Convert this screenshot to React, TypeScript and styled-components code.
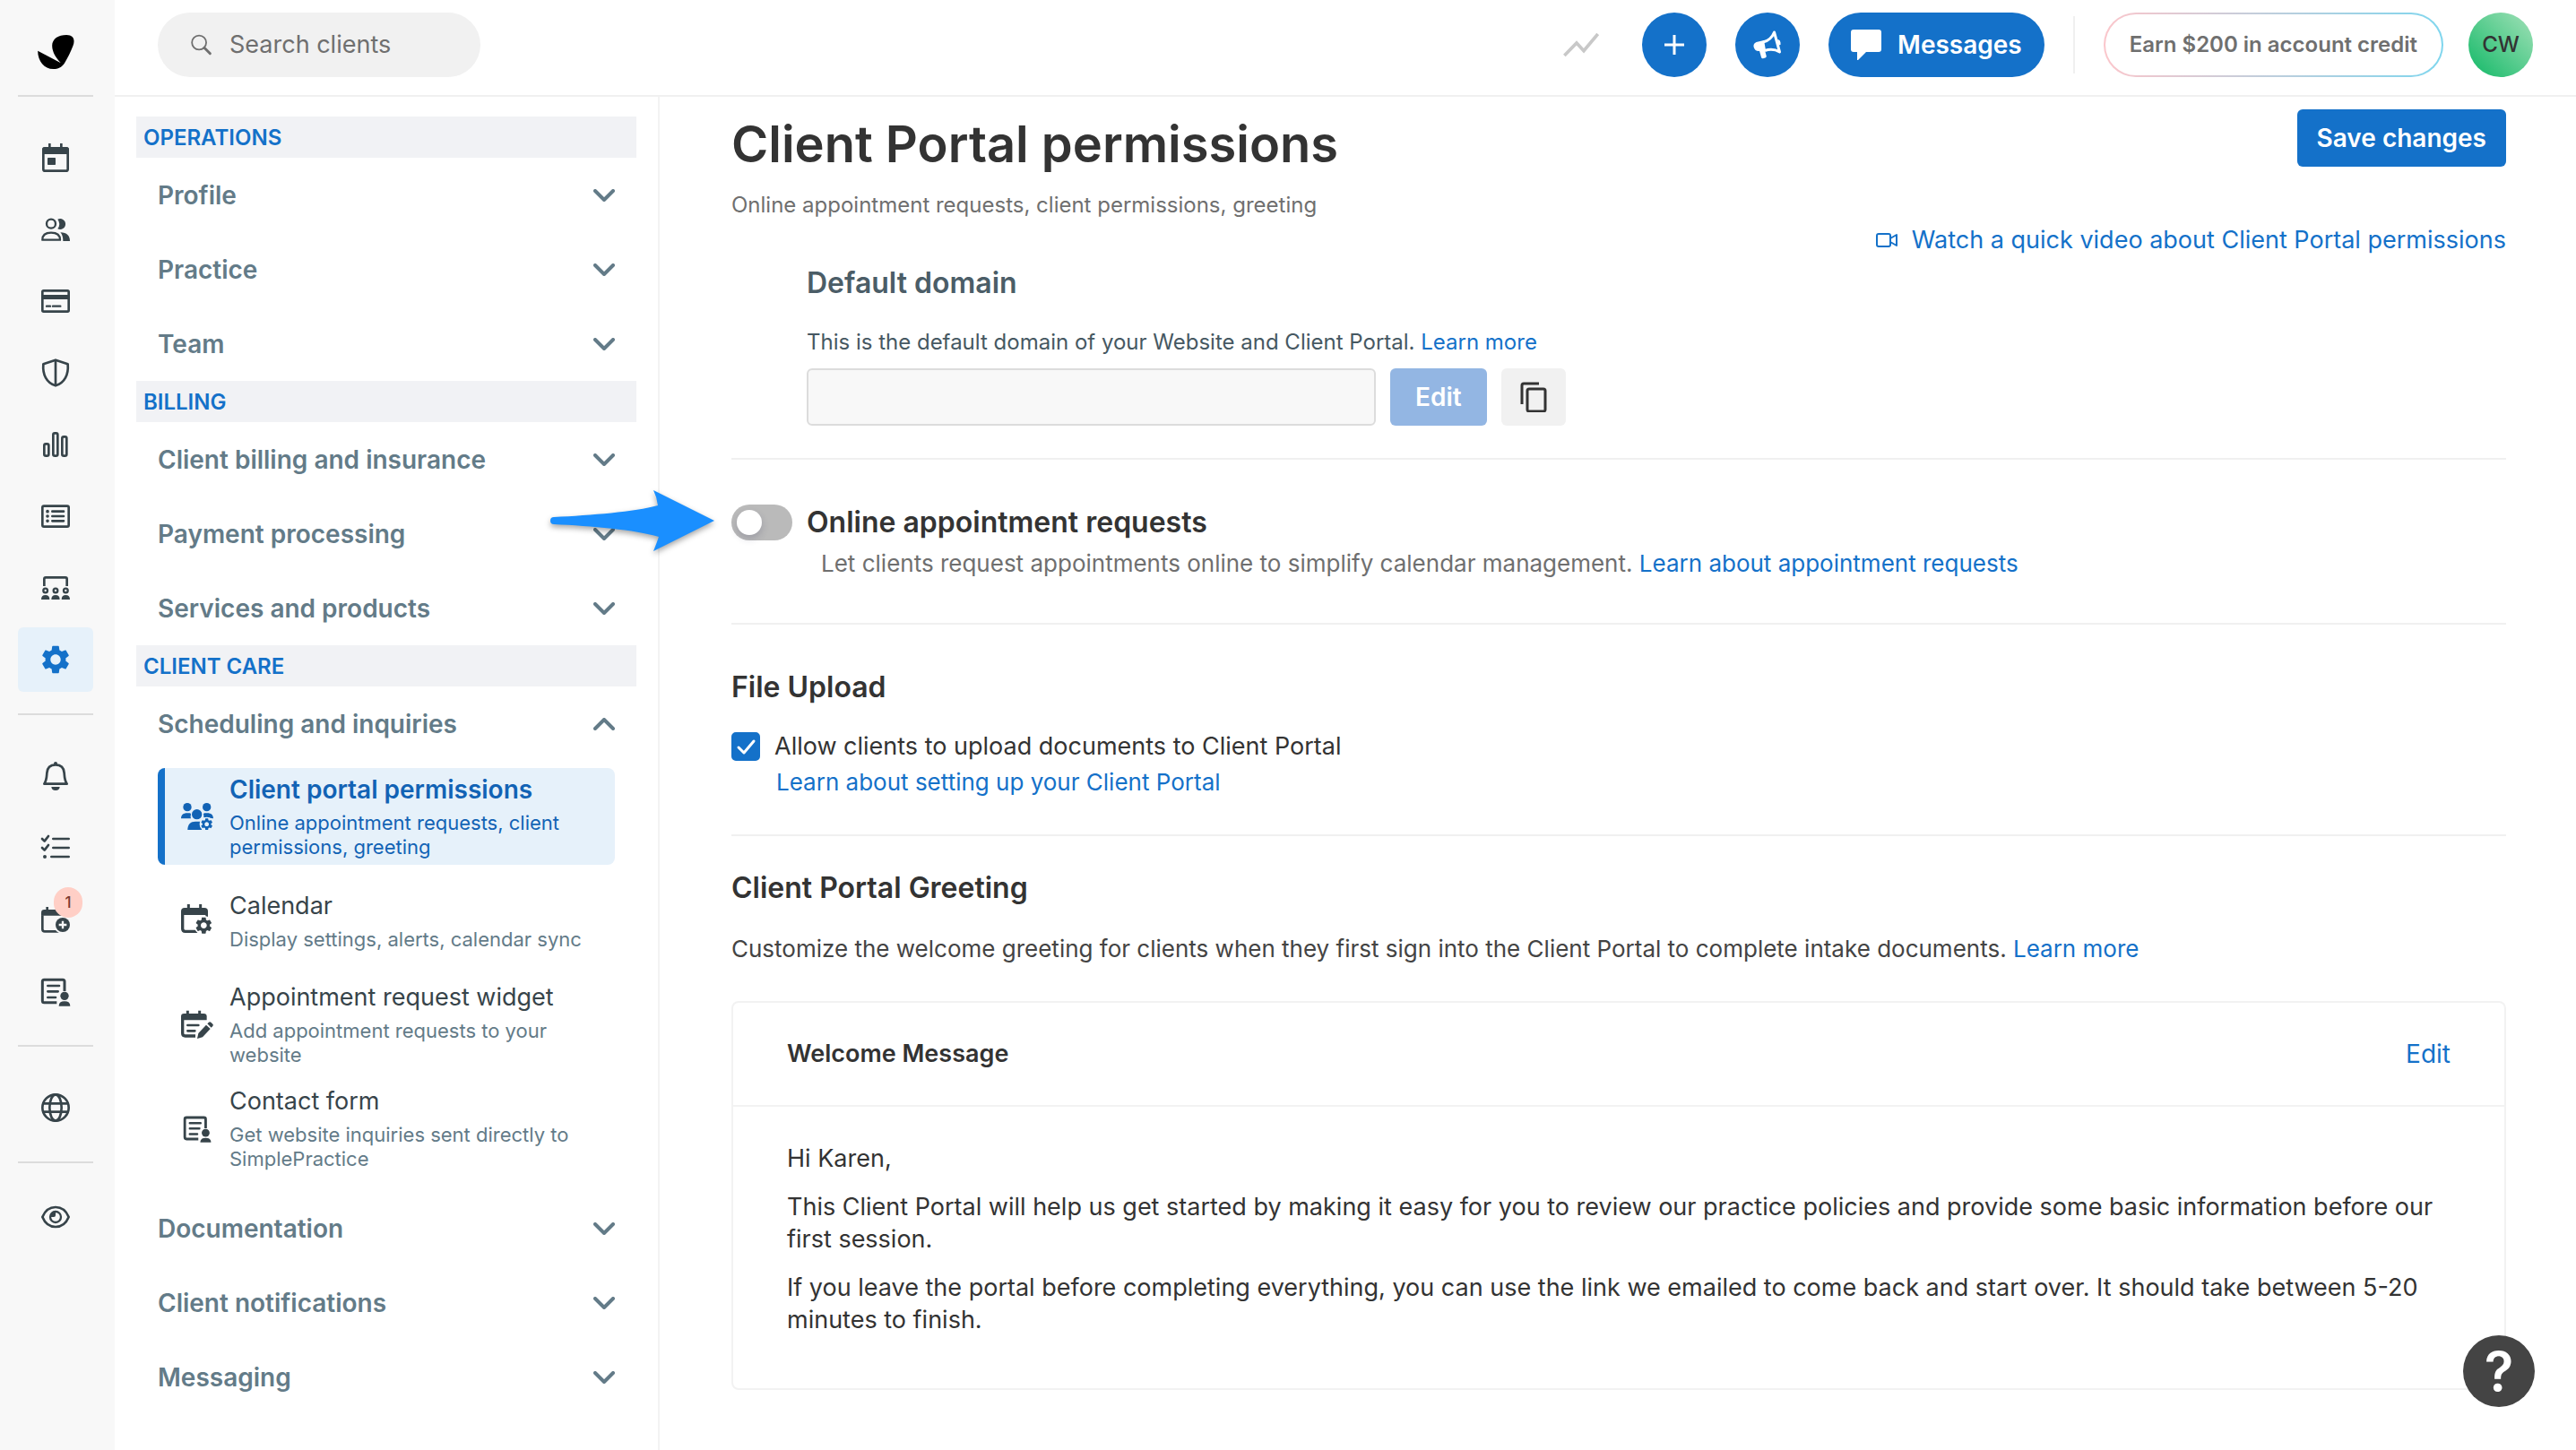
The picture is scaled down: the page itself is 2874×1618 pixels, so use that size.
import React from "react";
import styled, { createGlobalStyle, css } from "styled-components";
import { MdSettings } from "react-icons/md";

const color = {
  blue: "#1471c9",
  deepBlue: "#1263b5",
  tint: "#e6f1fa",
  ink: "#333333",
  slate: "#37444a",
  steel: "#637b88",
  grey: "#6f6f6f",
  line: "#f0f0f0",
  rail: "#f8f8f8",
};

const GlobalStyle = createGlobalStyle`
  *, *::before, *::after { box-sizing: border-box; }
  body {
    margin: 0;
    background: #ffffff;
    color: ${color.ink};
    font-family: Inter, "Liberation Sans", sans-serif;
    font-size: 27px;
    line-height: 36px;
  }
  h1, h2, h3, p, ul { margin: 0; padding: 0; }
  ul { list-style: none; }
  button, input { font: inherit; color: inherit; border: 0; margin: 0; padding: 0; }
  button { background: none; cursor: pointer; }
  a { color: ${color.blue}; text-decoration: none; }
  svg { display: block; flex: none; }
`;

/* ---------- shell ---------- */

const Shell = styled.div`
  display: flex;
  min-height: 100vh;
`;

const Rail = styled.nav`
  flex: 0 0 128px;
  padding: 0 24px 0 20px;
  background: ${color.rail};
  color: ${color.slate};
`;

const LogoLink = styled.a`
  display: flex;
  align-items: center;
  justify-content: center;
  height: 106px;
  padding-top: 10px;
  color: #000000;
`;

const RailGroup = styled.ul<{ $tight?: boolean }>`
  display: flex;
  flex-direction: column;
  gap: 8px;
  padding: ${(p) => (p.$tight ? "24px 0" : "32px 0 24px")};
  border-top: 2px solid #dcdcdc;
`;

const RailLink = styled.a<{ $active?: boolean }>`
  position: relative;
  display: flex;
  align-items: center;
  justify-content: center;
  height: 72px;
  border-radius: 6px;
  color: ${(p) => (p.$active ? color.blue : color.slate)};
  background: ${(p) => (p.$active ? color.tint : "transparent")};
`;

const Badge = styled.span`
  position: absolute;
  top: 0;
  left: 40px;
  width: 32px;
  height: 34px;
  border-radius: 17px;
  background: #ffcfc6;
  color: #7c3a30;
  font-size: 17px;
  font-weight: 500;
  line-height: 34px;
  text-align: center;
`;

const Column = styled.div`
  flex: 1;
  min-width: 0;
  display: flex;
  flex-direction: column;
`;

const Body = styled.div`
  flex: 1;
  display: flex;
`;

/* ---------- top bar ---------- */

const TopBar = styled.header`
  display: flex;
  align-items: center;
  height: 108px;
  padding: 0 48px 6px;
  border-bottom: 2px solid ${color.line};
`;

const SearchBox = styled.label`
  display: flex;
  align-items: center;
  gap: 18px;
  width: 360px;
  height: 72px;
  padding: 0 36px;
  border-radius: 36px;
  background: #f1f1f1;
  color: ${color.grey};
`;

const SearchInput = styled.input`
  width: 100%;
  min-width: 0;
  background: none;
  outline: none;
  &::placeholder { color: ${color.grey}; opacity: 1; }
`;

const TopActions = styled.div`
  display: flex;
  align-items: center;
  gap: 32px;
  margin-left: auto;
`;

const TrendButton = styled.button`
  width: 40px;
  margin-right: 16px;
`;

const RoundButton = styled.button`
  display: flex;
  align-items: center;
  justify-content: center;
  width: 72px;
  height: 72px;
  border-radius: 50%;
  background: ${color.blue};
  color: #ffffff;
`;

const MessagesButton = styled.button`
  display: flex;
  align-items: center;
  gap: 18px;
  height: 72px;
  padding: 0 25px;
  border-radius: 36px;
  background: ${color.blue};
  color: #ffffff;
  font-size: 28px;
  font-weight: 600;
`;

const Separator = styled.span`
  width: 2px;
  height: 64px;
  background: ${color.line};
`;

const CreditButton = styled.button`
  height: 72px;
  padding: 0 27px;
  border: 2px solid transparent;
  border-radius: 36px;
  background:
    linear-gradient(#ffffff, #ffffff) padding-box,
    linear-gradient(90deg, #fbc6cb, #7fd6ee) border-box;
  color: ${color.grey};
  font-size: 24px;
  font-weight: 600;
`;

const Avatar = styled.button`
  width: 72px;
  height: 72px;
  margin-left: -4px;
  border-radius: 50%;
  background: linear-gradient(45deg, #22bd70 12%, #94ddb0 90%);
  font-size: 24px;
  font-weight: 500;
`;

/* ---------- settings menu ---------- */

const Menu = styled.nav`
  flex: 0 0 608px;
  padding: 22px 24px 36px;
  border-right: 2px solid #f3f3f3;
`;

const MenuHeading = styled.h2`
  padding: 6px 8px 4px;
  background: #f1f2f5;
  color: ${color.blue};
  font-size: 24px;
  font-weight: 600;
`;

const MenuRow = styled.button`
  display: flex;
  align-items: center;
  justify-content: space-between;
  width: 100%;
  height: 83px;
  padding: 0 24px;
  color: ${color.steel};
  font-size: 28px;
  font-weight: 600;
  text-align: left;
`;

const SubMenu = styled.ul`
  display: flex;
  flex-direction: column;
  gap: 8px;
  padding: 8px 24px 16px;
`;

const SubLink = styled.a<{ $active?: boolean }>`
  display: flex;
  align-items: center;
  gap: 18px;
  min-height: 108px;
  padding: 6px 18px;
  border-left: 8px solid transparent;
  border-radius: 8px;
  color: ${color.slate};
  ${(p) =>
    p.$active &&
    css`
      border-left-color: ${color.blue};
      background: ${color.tint};
      color: ${color.deepBlue};
    `}
`;

const IconSlot = styled.span`
  display: flex;
  justify-content: center;
  flex: 0 0 36px;
`;

const SubText = styled.span`
  display: flex;
  flex-direction: column;
  gap: 6px;
`;

const SubTitle = styled.span<{ $active?: boolean }>`
  font-size: ${(p) => (p.$active ? 28 : 27)}px;
  font-weight: ${(p) => (p.$active ? 600 : 400)};
`;

const SubNote = styled.span<{ $active?: boolean }>`
  color: ${(p) => (p.$active ? color.deepBlue : color.steel)};
  font-size: 22px;
  line-height: 27px;
`;

/* ---------- page ---------- */

const Page = styled.main`
  flex: 1;
  min-width: 0;
  padding: 14px 78px 68px 80px;
`;

const PageHead = styled.div`
  display: flex;
  justify-content: space-between;
  margin-bottom: 10px;
`;

const PageTitle = styled.h1`
  margin-bottom: 11px;
  font-size: 56px;
  font-weight: 600;
  line-height: 78px;
`;

const Note = styled.p`
  font-size: 24px;
  color: ${color.grey};
`;

const HeadActions = styled.div`
  display: flex;
  flex-direction: column;
  align-items: flex-end;
  gap: 64px;
`;

const SolidButton = styled.button<{ $muted?: boolean }>`
  height: 64px;
  padding: 0 ${(p) => (p.$muted ? 28 : 22)}px;
  border-radius: 6px;
  background: ${(p) => (p.$muted ? "#93b6e3" : color.blue)};
  color: #ffffff;
  font-size: 28px;
  font-weight: 600;
`;

const VideoLink = styled.a`
  display: flex;
  align-items: center;
  gap: 16px;
`;

const Section = styled.section<{ $top?: number; $bottom?: number }>`
  padding: ${(p) => p.$top ?? 50}px 0 ${(p) => p.$bottom ?? 40}px;
  border-bottom: 2px solid ${color.line};
  &:last-child { border-bottom: 0; }
`;

const Indent = styled.div`
  padding-left: 84px;
`;

const Heading = styled.h2<{ $gap?: number; $soft?: boolean }>`
  margin-bottom: ${(p) => p.$gap ?? 28}px;
  color: ${(p) => (p.$soft ? "#4b5d67" : color.ink)};
  font-size: 32px;
  font-weight: 600;
  line-height: 40px;
`;

const DomainLabel = styled.p`
  margin-bottom: 11px;
  color: #465862;
  font-size: 24px;
`;

const DomainRow = styled.div`
  display: flex;
  gap: 16px;
`;

const DomainInput = styled.input`
  width: 635px;
  height: 64px;
  padding: 0 20px;
  border: 2px solid #dcdcdc;
  border-radius: 6px;
  background: #f8f8f8;
`;

const CopyButton = styled.button`
  display: flex;
  align-items: center;
  justify-content: center;
  width: 72px;
  height: 64px;
  border-radius: 6px;
  background: #f1f1f1;
`;

const ToggleLine = styled.label`
  position: relative;
  display: flex;
  align-items: center;
  gap: 16px;
  width: max-content;
  margin-bottom: 8px;
`;

const Toggle = styled.input`
  appearance: none;
  display: flex;
  align-items: center;
  width: 68px;
  height: 40px;
  padding: 6px;
  border-radius: 20px;
  background: #bababa;
  cursor: pointer;
  &::before {
    content: "";
    width: 28px;
    height: 28px;
    border-radius: 50%;
    background: #ffffff;
    box-shadow: 0 4px 8px rgba(39, 39, 80, 0.2);
  }
  &:checked { background: ${color.blue}; justify-content: flex-end; }
`;

const ToggleTitle = styled.span`
  font-size: 32px;
  font-weight: 600;
  line-height: 40px;
`;

const ToggleNote = styled.p`
  padding-left: 100px;
  color: ${color.grey};
  font-size: 26px;
`;

const Pointer = styled.svg`
  position: absolute;
  top: -18px;
  right: calc(100% + 18px);
  filter: drop-shadow(0 3px 3px rgba(0, 0, 0, 0.35));
  pointer-events: none;
`;

const CheckLine = styled.label`
  display: flex;
  align-items: center;
  gap: 16px;
  width: max-content;
  margin-bottom: 4px;
`;

const CheckSlot = styled.span`
  display: grid;
  & > * { grid-area: 1 / 1; }
`;

const Checkbox = styled.input`
  appearance: none;
  width: 32px;
  height: 32px;
  border: 2px solid ${color.blue};
  border-radius: 5px;
  cursor: pointer;
  & + svg { visibility: hidden; pointer-events: none; }
  &:checked { background: ${color.blue}; }
  &:checked + svg { visibility: visible; }
`;

const CheckNote = styled.p`
  padding-left: 50px;
  font-size: 26px;
`;

const Lead = styled.p`
  margin-bottom: 40px;
  color: #444444;
  font-size: 26px;
`;

const Card = styled.article`
  border: 2px solid #f2f2f2;
  border-radius: 8px;
`;

const CardHead = styled.div`
  display: flex;
  justify-content: space-between;
  padding: 39px 60px;
  border-bottom: 2px solid #f2f2f2;
`;

const CardTitle = styled.h3`
  font-size: 27px;
  font-weight: 600;
`;

const TextButton = styled.button`
  color: ${color.blue};
  font-size: 28px;
`;

const CardBody = styled.div`
  padding: 40px 60px;
  & p { margin-bottom: 18px; }
`;

const HelpButton = styled.button`
  position: fixed;
  right: 46px;
  bottom: 48px;
  width: 80px;
  height: 80px;
  border-radius: 50%;
  background: #444444;
  color: #ffffff;
  font-size: 60px;
  font-weight: 600;
  line-height: 80px;
`;

/* ---------- icons ---------- */

type IconProps = { children: React.ReactNode; size?: number };

const Icon = ({ children, size = 36 }: IconProps) => (
  <svg
    width={size}
    height={size}
    viewBox="0 0 108 108"
    fill="none"
    stroke="currentColor"
    strokeWidth="8"
    strokeLinejoin="round"
    aria-hidden="true"
  >
    {children}
  </svg>
);

const solid = { fill: "currentColor", stroke: "none" };

const Logo = () => (
  <svg width="41" height="38" viewBox="66 57 122 114" fill="currentColor" aria-hidden="true">
    <path d="M66 110 L143 151 C128 135 114 115 114 93 C114 70 135 57 162 57 C187 57 191 74 184 93 C176 115 165 135 155 152 C146 165 134 171 118 171 C88 171 66 145 66 110Z" />
  </svg>
);

const CalendarIcon = () => (
  <Icon>
    <rect x="13" y="22" width="82" height="76" rx="6" />
    <path d="M9 42V28q0-10 10-10h70q10 0 10 10v14z" {...solid} />
    <path d="M30 6h8v16h-8zM69 6h8v16h-8z" {...solid} />
    <rect x="27" y="54" width="27" height="24" rx="2" {...solid} />
  </Icon>
);

const PeopleIcon = () => (
  <Icon>
    <circle cx="39" cy="35" r="15" strokeWidth="7" />
    <path d="M61 20A18 18 0 1 1 61 52A27 27 0 0 0 61 20z" {...solid} />
    <path d="M10 89C10 72 22 65 39 65S69 72 69 89z" strokeWidth="7" />
    <path d="M70 64C92 65 102 75 102 93H79C79 79 76 71 70 64z" {...solid} />
  </Icon>
);

const CardIcon = () => (
  <Icon>
    <rect x="10" y="19" width="88" height="70" rx="4" />
    <path d="M8 33h92v15H8z" {...solid} />
    <path d="M24 71h12M45 71h25" strokeWidth="7" strokeLinecap="round" />
  </Icon>
);

const ShieldIcon = () => (
  <Icon>
    <path d="M54 11L95 25C98 60 84 88 54 97C24 88 10 60 13 25z" />
    <path d="M54 11V97" />
  </Icon>
);

const BarsIcon = () => (
  <Icon>
    <rect x="16" y="52" width="15" height="40" rx="5" />
    <rect x="46" y="16" width="15" height="76" rx="5" />
    <rect x="76" y="28" width="15" height="64" rx="5" />
  </Icon>
);

const ListIcon = () => (
  <Icon>
    <rect x="10" y="20" width="88" height="69" rx="5" />
    <path d="M43 38h38M43 54h38M43 70h38" strokeWidth="8" strokeLinecap="round" />
    <path d="M27 38h.1M27 54h.1M27 70h.1" strokeWidth="11" strokeLinecap="round" />
  </Icon>
);

const GroupIcon = () => (
  <Icon>
    <path d="M16 48V24q0-5 5-5h66q5 0 5 5v24" />
    {[20, 54, 88].map((x) => (
      <g key={x}>
        <circle cx={x} cy="63" r="7" strokeWidth="7" />
        <path d={`M${x - 14} 93q0-15 14-15t14 15z`} {...solid} />
      </g>
    ))}
  </Icon>
);

const BellIcon = () => (
  <Icon>
    <path d="M16 80H92C84 68 84 58 83 44C82 26 72 16 54 16S26 26 25 44C24 58 24 68 16 80z" />
    <circle cx="54" cy="12" r="6" {...solid} />
    <path d="M40 90h28q-1 12-14 12t-14-12z" {...solid} />
  </Icon>
);

const ChecklistIcon = () => (
  <Icon>
    <path d="M46 24h52M46 54h52M40 84h58" strokeLinecap="round" />
    <path d="M9 24l8 8 13-17M9 54l8 8 13-17" strokeLinecap="round" />
    <circle cx="18" cy="84" r="6" {...solid} />
  </Icon>
);

const CalendarPlusIcon = () => (
  <Icon>
    <path d="M26 12v16" />
    <path d="M10 40v46q0 8 8 8h62" />
    <path d="M6 41V31q0-10 10-10h70v20z" {...solid} />
    <circle cx="78" cy="72" r="30" fill={color.rail} stroke="none" />
    <circle cx="78" cy="72" r="24" {...solid} />
    <path d="M78 59v26M65 72h26" stroke={color.rail} strokeWidth="7" />
  </Icon>
);

const FormIcon = ({ size, back = color.rail }: { size?: number; back?: string }) => (
  <Icon size={size}>
    <rect x="10" y="16" width="74" height="76" rx="6" strokeWidth="9" />
    <path d="M28 36h38M28 55h34M28 75h26" strokeLinecap="round" />
    <path d="M58 108V84q4-8 8-10V54h42v54z" fill={back} stroke="none" />
    <circle cx="84" cy="70" r="14" {...solid} />
    <path d="M65 104q0-16 19-16t19 16z" {...solid} />
  </Icon>
);

const GlobeIcon = () => (
  <Icon>
    <circle cx="54" cy="54" r="44" />
    <ellipse cx="54" cy="54" rx="20" ry="44" />
    <path d="M12 40h84M12 68h84" />
  </Icon>
);

const EyeIcon = () => (
  <Icon>
    <path d="M10 54C28 10 80 10 98 54C80 98 28 98 10 54z" />
    <circle cx="54" cy="54" r="18" strokeWidth="7" />
    <path d="M54 34v14q0 6-6 6H36q0-18 18-20z" {...solid} />
  </Icon>
);

const gear =
  "M19.14 12.94c.04-.3.06-.61.06-.94 0-.32-.02-.64-.07-.94l2.03-1.58a.49.49 0 0 0 .12-.61l-1.92-3.32a.488.488 0 0 0-.59-.22l-2.39.96c-.5-.38-1.03-.7-1.62-.94l-.36-2.54a.484.484 0 0 0-.48-.41h-3.84c-.24 0-.43.17-.47.41l-.36 2.54c-.59.24-1.13.57-1.62.94l-2.39-.96c-.22-.08-.47 0-.59.22L2.74 8.87c-.12.21-.08.47.12.61l2.03 1.58c-.05.3-.09.63-.09.94s.02.64.07.94l-2.03 1.58a.49.49 0 0 0-.12.61l1.92 3.32c.12.22.37.29.59.22l2.39-.96c.5.38 1.03.7 1.62.94l.36 2.54c.05.24.24.41.48.41h3.84c.24 0 .44-.17.47-.41l.36-2.54c.59-.24 1.13-.56 1.62-.94l2.39.96c.22.08.47 0 .59-.22l1.92-3.32c.12-.22.07-.47-.12-.61l-2.01-1.58zM12 15.6c-1.98 0-3.6-1.62-3.6-3.6s1.62-3.6 3.6-3.6 3.6 1.62 3.6 3.6-1.62 3.6-3.6 3.6z";

const MiniGear = ({ x, y, r, back }: { x: number; y: number; r: number; back: string }) => (
  <>
    <circle cx={x} cy={y} r={r + 4} fill={back} stroke="none" />
    <path d={gear} {...solid} transform={`translate(${x} ${y}) scale(${r / 10}) translate(-12 -12)`} />
  </>
);

const PeopleGearIcon = () => (
  <Icon>
    <g {...solid}>
      <circle cx="21" cy="23" r="14" />
      <circle cx="86" cy="23" r="14" />
      <circle cx="53" cy="47" r="17" />
      <path d="M0 61C0 49 8 43 20 43h9q5 1 4 5-3 7 0 13z" />
      <path d="M108 61C108 49 100 43 88 43h-9q-5 1-4 5 3 7 0 9z" />
      <path d="M22 99c0-19 10-28 26-28h22v28z" />
    </g>
    <MiniGear x={86} y={80} r={20} back={color.tint} />
  </Icon>
);

const CalendarGearIcon = () => (
  <Icon>
    <path d="M25 0v16M65 0v16" strokeWidth="9" />
    <path d="M5 34v48q0 9 9 9h46" strokeWidth="10" />
    <path d="M86 30v20" />
    <path d="M0 36V24q0-12 12-12h66q12 0 12 12v12z" {...solid} />
    <MiniGear x={76} y={71} r={28} back="#ffffff" />
  </Icon>
);

const CalendarEditIcon = () => (
  <Icon>
    <path d="M22 8v16M62 8v16" strokeWidth="9" />
    <path d="M5 38v46q0 9 9 9h34" strokeWidth="10" />
    <path d="M0 40V28q0-10 10-10h66q10 0 10 10v12z" {...solid} />
    <path d="M22 57h36M22 76h24" strokeLinecap="round" />
    <path d="M54 102l4-18 26-28 14 13-26 28z" {...solid} />
    <path d="M88 52l5-5q3-3 7 0l6 6q3 3 0 7l-5 5z" {...solid} />
  </Icon>
);

const Chevron = ({ up }: { up?: boolean }) => (
  <svg width="24" height="14" viewBox="0 0 24 14" fill="none" stroke="currentColor" strokeWidth="4" strokeLinecap="round" strokeLinejoin="round" aria-hidden="true">
    <path d={up ? "M2 12L12 2L22 12" : "M2 2L12 12L22 2"} />
  </svg>
);

const SearchIcon = () => (
  <svg width="26" height="26" viewBox="0 0 72 72" fill="none" stroke="currentColor" aria-hidden="true">
    <circle cx="28" cy="29" r="22" strokeWidth="5" />
    <path d="M44 45L62 63" strokeWidth="8" strokeLinecap="round" />
  </svg>
);

const TrendIcon = () => (
  <svg width="40" height="28" viewBox="0 0 120 84" fill="none" stroke="#c8c8c8" strokeWidth="11" aria-hidden="true">
    <path d="M4 78L45 36L69 62L116 6" />
  </svg>
);

const PlusIcon = () => (
  <svg width="22" height="22" viewBox="0 0 22 22" stroke="currentColor" strokeWidth="3" aria-hidden="true">
    <path d="M11 0V22M0 11H22" />
  </svg>
);

const MegaphoneIcon = () => (
  <svg width="36" height="36" viewBox="0 0 36 36" fill="none" stroke="currentColor" strokeWidth="3" strokeLinejoin="round" aria-hidden="true">
    <path d="M13 15Q22 13 25.500 4L31.500 26Q24 21.500 15 24.500" />
    <path d="M14 13L5.500 15Q2 16.500 2.500 20Q3.500 25 8 25L16 24z" fill="currentColor" stroke="none" />
    <path d="M8.500 23L11 32Q11.500 33.500 13 33.200L15.500 32.500Q17 32 16.700 30.500L14.500 22z" fill="currentColor" stroke="none" />
    <path d="M29 12Q33 12 32.500 18L30.500 18.500z" fill="currentColor" stroke="none" />
  </svg>
);

const ChatIcon = () => (
  <svg width="34" height="34" viewBox="0 0 34 34" fill="currentColor" aria-hidden="true">
    <path d="M3 0H31Q34 0 34 3V22Q34 25 31 25H17L8 34H7V25H3Q0 25 0 22V3Q0 0 3 0z" />
  </svg>
);

const VideoIcon = () => (
  <svg width="24" height="16" viewBox="0 0 24 16" fill="none" stroke="currentColor" strokeWidth="2" strokeLinejoin="round" aria-hidden="true">
    <rect x="1" y="1" width="15" height="14" rx="2" />
    <path d="M16 6L23 2V14L16 10" />
  </svg>
);

const CopyIcon = () => (
  <svg width="30" height="34" viewBox="0 0 30 34" fill="none" stroke="currentColor" strokeWidth="3" strokeLinejoin="round" aria-hidden="true">
    <rect x="8" y="8" width="20" height="25" rx="2" />
    <path d="M2 25V4Q2 2 4 2H21" />
  </svg>
);

/* ---------- data ---------- */

type RailItem = { label: string; icon: React.ReactNode; active?: boolean; badge?: string };

const railGroups: RailItem[][] = [
  [
    { label: "Calendar", icon: <CalendarIcon /> },
    { label: "Clients", icon: <PeopleIcon /> },
    { label: "Billing", icon: <CardIcon /> },
    { label: "Insurance", icon: <ShieldIcon /> },
    { label: "Analytics", icon: <BarsIcon /> },
    { label: "Activity", icon: <ListIcon /> },
    { label: "Supervision", icon: <GroupIcon /> },
    { label: "Settings", icon: <MdSettings size={38} />, active: true },
  ],
  [
    { label: "Reminders", icon: <BellIcon /> },
    { label: "Tasks", icon: <ChecklistIcon /> },
    { label: "Requests", icon: <CalendarPlusIcon />, badge: "1" },
    { label: "Inquiries", icon: <FormIcon /> },
  ],
  [{ label: "Website", icon: <GlobeIcon /> }],
  [{ label: "Preview", icon: <EyeIcon /> }],
];

const subItems = [
  {
    title: "Client portal permissions",
    note: "Online appointment requests, client permissions, greeting",
    icon: <PeopleGearIcon />,
    active: true,
  },
  { title: "Calendar", note: "Display settings, alerts, calendar sync", icon: <CalendarGearIcon /> },
  { title: "Appointment request widget", note: "Add appointment requests to your website", icon: <CalendarEditIcon /> },
  {
    title: "Contact form",
    note: "Get website inquiries sent directly to SimplePractice",
    icon: <FormIcon size={34} back="#ffffff" />,
  },
];

const sections = [
  { heading: "OPERATIONS", rows: ["Profile", "Practice", "Team"] },
  { heading: "BILLING", rows: ["Client billing and insurance", "Payment processing", "Services and products"] },
  {
    heading: "CLIENT CARE",
    rows: ["Scheduling and inquiries", "Documentation", "Client notifications", "Messaging"],
  },
];

const OPEN_ROW = "Scheduling and inquiries";

/* ---------- app ---------- */

export default function App() {
  return (
    <>
      <GlobalStyle />
      <Shell>
        <Rail aria-label="Main">
          <LogoLink href="#home" aria-label="Home">
            <Logo />
          </LogoLink>
          {railGroups.map((group, i) => (
            <RailGroup key={i} $tight={i === 3}>
              {group.map((item) => (
                <li key={item.label}>
                  <RailLink href={`#${item.label.toLowerCase()}`} aria-label={item.label} $active={item.active}>
                    {item.icon}
                    {item.badge && <Badge>{item.badge}</Badge>}
                  </RailLink>
                </li>
              ))}
            </RailGroup>
          ))}
        </Rail>

        <Column>
          <TopBar>
            <SearchBox>
              <SearchIcon />
              <SearchInput type="text" placeholder="Search clients" aria-label="Search clients" />
            </SearchBox>
            <TopActions>
              <TrendButton aria-label="Trends">
                <TrendIcon />
              </TrendButton>
              <RoundButton aria-label="Create">
                <PlusIcon />
              </RoundButton>
              <RoundButton aria-label="Announcements">
                <MegaphoneIcon />
              </RoundButton>
              <MessagesButton>
                <ChatIcon />
                Messages
              </MessagesButton>
              <Separator />
              <CreditButton>Earn $200 in account credit</CreditButton>
              <Avatar>CW</Avatar>
            </TopActions>
          </TopBar>

          <Body>
            <Menu aria-label="Settings">
              {sections.map((section) => (
                <section key={section.heading}>
                  <MenuHeading>{section.heading}</MenuHeading>
                  {section.rows.map((row) => (
                    <React.Fragment key={row}>
                      <MenuRow aria-expanded={row === OPEN_ROW}>
                        {row}
                        <Chevron up={row === OPEN_ROW} />
                      </MenuRow>
                      {row === OPEN_ROW && (
                        <SubMenu>
                          {subItems.map((item) => (
                            <li key={item.title}>
                              <SubLink href="#settings" $active={item.active}>
                                <IconSlot>{item.icon}</IconSlot>
                                <SubText>
                                  <SubTitle $active={item.active}>{item.title}</SubTitle>
                                  <SubNote $active={item.active}>{item.note}</SubNote>
                                </SubText>
                              </SubLink>
                            </li>
                          ))}
                        </SubMenu>
                      )}
                    </React.Fragment>
                  ))}
                </section>
              ))}
            </Menu>

            <Page>
              <PageHead>
                <div>
                  <PageTitle>Client Portal permissions</PageTitle>
                  <Note>Online appointment requests, client permissions, greeting</Note>
                </div>
                <HeadActions>
                  <SolidButton>Save changes</SolidButton>
                  <VideoLink href="#video">
                    <VideoIcon />
                    Watch a quick video about Client Portal permissions
                  </VideoLink>
                </HeadActions>
              </PageHead>

              <Section $top={0} $bottom={36}>
                <Indent>
                  <Heading $soft>Default domain</Heading>
                  <DomainLabel>
                    <label htmlFor="domain">This is the default domain of your Website and Client Portal.</label>{" "}
                    <a href="#domain-help">Learn more</a>
                  </DomainLabel>
                  <DomainRow>
                    <DomainInput id="domain" type="text" readOnly />
                    <SolidButton $muted>Edit</SolidButton>
                    <CopyButton aria-label="Copy domain">
                      <CopyIcon />
                    </CopyButton>
                  </DomainRow>
                </Indent>
              </Section>

              <Section $bottom={48}>
                <ToggleLine>
                  <Toggle type="checkbox" role="switch" />
                  <ToggleTitle>Online appointment requests</ToggleTitle>
                  <Pointer width="188" height="72" viewBox="0 0 188 72" aria-hidden="true">
                    <path d="M8 32C50 30 98 26 124 19Q123 10 119 2L187 36L119 70Q123 60 125 54C98 46 50 42 8 40Q4 40 4 36T8 32z" fill="#1a8fff" />
                  </Pointer>
                </ToggleLine>
                <ToggleNote>
                  Let clients request appointments online to simplify calendar management.{" "}
                  <a href="#requests-help">Learn about appointment requests</a>
                </ToggleNote>
              </Section>

              <Section>
                <Heading>File Upload</Heading>
                <CheckLine>
                  <CheckSlot>
                    <Checkbox type="checkbox" defaultChecked />
                    <svg width="32" height="32" viewBox="0 0 32 32" fill="none" stroke="#ffffff" strokeWidth="3" strokeLinecap="round" strokeLinejoin="round" aria-hidden="true">
                      <path d="M8 17L14 23L25 10" />
                    </svg>
                  </CheckSlot>
                  Allow clients to upload documents to Client Portal
                </CheckLine>
                <CheckNote>
                  <a href="#portal-help">Learn about setting up your Client Portal</a>
                </CheckNote>
              </Section>

              <Section $top={38} $bottom={0}>
                <Heading $gap={30}>Client Portal Greeting</Heading>
                <Lead>
                  Customize the welcome greeting for clients when they first sign into the Client Portal to complete
                  intake documents. <a href="#greeting-help">Learn more</a>
                </Lead>
                <Card>
                  <CardHead>
                    <CardTitle>Welcome Message</CardTitle>
                    <TextButton>Edit</TextButton>
                  </CardHead>
                  <CardBody>
                    <p>Hi Karen,</p>
                    <p>
                      This Client Portal will help us get started by making it easy for you to review our practice
                      policies and provide some basic information before our first session.
                    </p>
                    <p>
                      If you leave the portal before completing everything, you can use the link we emailed to come
                      back and start over. It should take between 5-20 minutes to finish.
                    </p>
                  </CardBody>
                </Card>
              </Section>
            </Page>
          </Body>
        </Column>
      </Shell>
      <HelpButton aria-label="Help">?</HelpButton>
    </>
  );
}
